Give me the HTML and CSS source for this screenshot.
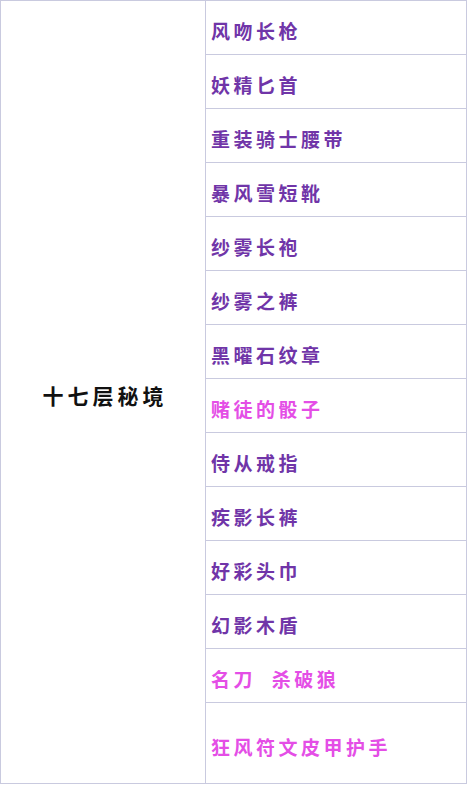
FILE: index.html
```html
<!DOCTYPE html>
<html lang="zh">
<head>
  <meta charset="UTF-8">
  <title>十七层秘境</title>
  <meta name="viewport" content="width=device-width,initial-scale=1">
  <link rel="stylesheet" href="styles.css">
</head>
<body>
  <table class="loot">
    <tr><td class="zone" rowspan="14">十七层秘境</td><td class="item epic">风吻长枪</td></tr>
    <tr><td class="item epic">妖精匕首</td></tr>
    <tr><td class="item epic">重装骑士腰带</td></tr>
    <tr><td class="item epic">暴风雪短靴</td></tr>
    <tr><td class="item epic">纱雾长袍</td></tr>
    <tr><td class="item epic">纱雾之裤</td></tr>
    <tr><td class="item epic">黑曜石纹章</td></tr>
    <tr><td class="item rare">赌徒的骰子</td></tr>
    <tr><td class="item epic">侍从戒指</td></tr>
    <tr><td class="item epic">疾影长裤</td></tr>
    <tr><td class="item epic">好彩头巾</td></tr>
    <tr><td class="item epic">幻影木盾</td></tr>
    <tr><td class="item rare">名刀&nbsp;&nbsp;杀破狼</td></tr>
    <tr><td class="item rare last">狂风符文皮甲护手</td></tr>
  </table>
</body>
</html>
```

FILE: styles.css
```css
body{margin:0;background:#fff;font-family:"Noto Sans CJK SC","Noto Sans CJK JP",serif;}
.loot{width:467px;border-collapse:collapse;table-layout:fixed;}
.loot td{border:1px solid #c9cadf;padding:0;}
.zone{width:200px;text-align:center;vertical-align:middle;font-size:21px;font-weight:bold;color:#111;letter-spacing:4px;padding:6px 0 0 4px !important;}
.item{height:54px;padding:6px 0 0 5px !important;box-sizing:border-box;font-size:19px;font-weight:bold;letter-spacing:3.5px;vertical-align:middle;}
.item.last{height:81px;}
.epic{color:#7035a8;}
.rare{color:#e44ee6;}
```
